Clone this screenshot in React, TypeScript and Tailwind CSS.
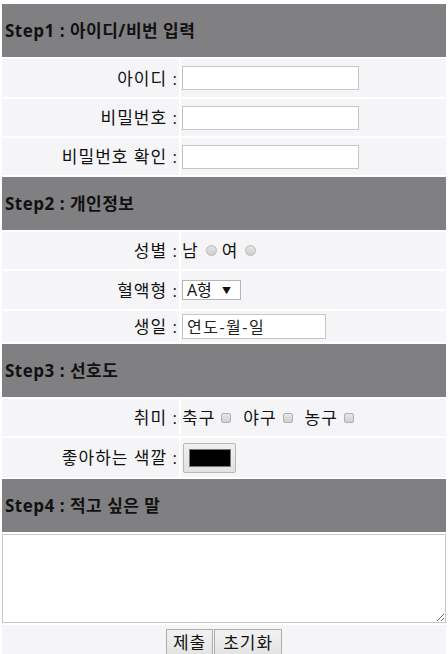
import React from "react";

const FONT = "font-['Open_Sans','Noto_Sans_CJK_KR',sans-serif]";

function Header({ children }: { children: React.ReactNode }) {
  return (
    <div className="col-span-2 h-[53px] bg-[#807f82] flex items-center pl-[3px] text-[17px] tracking-[0.5px] font-bold text-[#111] leading-none">
      {children}
    </div>
  );
}

function Label({ children, h }: { children: React.ReactNode; h: string }) {
  return (
    <div className={`${h} bg-[#f5f5f7] flex items-center justify-end pr-[1px] text-[17px] tracking-[1px] text-[#111] leading-none`}>
      {children}
    </div>
  );
}

function Cell({ children, h }: { children: React.ReactNode; h: string }) {
  return (
    <div className={`${h} bg-[#f5f5f7] flex items-center pl-[1px] text-[17px] tracking-[1px] text-[#111] leading-none`}>
      {children}
    </div>
  );
}

function TextBox({ w }: { w: string }) {
  return (
    <input
      type="text"
      className={`${w} h-[24px] bg-white border border-[#c6c6c6] outline-none px-1`}
    />
  );
}

function Radio() {
  return (
    <span className="inline-block w-[11px] h-[11px] rounded-full border border-[#b8b8b8] bg-gradient-to-b from-[#e4e4e4] to-[#cfcfcf] ml-[7px] mr-[5px]" />
  );
}

function Check() {
  return (
    <span className="inline-block w-[10px] h-[10px] rounded-[2px] border border-[#b0b0b0] bg-gradient-to-b from-[#e8e8e8] to-[#d0d0d0] ml-[6px]" />
  );
}

export default function App() {
  return (
    <div className={`${FONT} w-[448px] h-[654px] bg-white overflow-hidden pt-[4px] px-[2px]`}>
      <div className="grid grid-cols-[177px_265px] gap-[2px]">
        <Header>Step1 : 아이디/비번 입력</Header>
        <Label h="h-[38px]">아이디 :</Label>
        <Cell h="h-[38px]"><TextBox w="w-[177px]" /></Cell>
        <Label h="h-[37px]">비밀번호 :</Label>
        <Cell h="h-[37px]"><TextBox w="w-[177px]" /></Cell>
        <Label h="h-[37px]">비밀번호 확인 :</Label>
        <Cell h="h-[37px]"><TextBox w="w-[177px]" /></Cell>

        <Header>Step2 : 개인정보</Header>
        <Label h="h-[37px]">성별 :</Label>
        <Cell h="h-[37px]">
          <span>남</span>
          <Radio />
          <span>여</span>
          <Radio />
        </Cell>
        <Label h="h-[38px]">혈액형 :</Label>
        <Cell h="h-[38px]">
          <div className="w-[59px] h-[20px] bg-white border border-[#b5b5b5] flex items-center justify-between pl-[4px] pr-[9px] text-[16px] tracking-normal">
            <span>A형</span>
            <span className="text-[9px]">▼</span>
          </div>
        </Cell>
        <Label h="h-[31px]">생일 :</Label>
        <Cell h="h-[31px]">
          <div className="w-[144px] h-[25px] bg-white border border-[#c6c6c6] flex items-center pl-[4px] text-[16px] tracking-[1.5px] text-[#222]">
            연도-월-일
          </div>
        </Cell>

        <Header>Step3 : 선호도</Header>
        <Label h="h-[37px]">취미 :</Label>
        <Cell h="h-[37px]">
          <span>축구</span>
          <Check />
          <span className="ml-[12px]">야구</span>
          <Check />
          <span className="ml-[12px]">농구</span>
          <Check />
        </Cell>
        <Label h="h-[39px]">좋아하는 색깔 :</Label>
        <Cell h="h-[39px]">
          <div className="w-[53px] h-[30px] ml-[1px] bg-gradient-to-b from-[#f0f0f0] to-[#e2e2e2] border border-[#b8b8b8] rounded-[2px] flex items-center justify-center">
            <div className="w-[42px] h-[18px] bg-black border border-[#777]" />
          </div>
        </Cell>

        <Header>Step4 : 적고 싶은 말</Header>
        <div className="col-span-2 h-[89px] bg-[#f5f5f7] flex">
          <textarea className="w-full h-full bg-white border border-[#c6c6c6] outline-none resize-y" />
        </div>
        <div className="col-span-2 h-[40px] bg-[#f5f5f7] flex justify-center items-start pt-[4px]">
          <button className="h-[26px] px-[6px] bg-gradient-to-b from-[#f2f2f2] to-[#e4e4e4] border border-[#adadad] text-[17px] tracking-[1px] leading-none text-[#111]">
            제출
          </button>
          <button className="h-[26px] px-[8px] ml-[1px] bg-gradient-to-b from-[#f2f2f2] to-[#e4e4e4] border border-[#adadad] text-[17px] tracking-[1px] leading-none text-[#111]">
            초기화
          </button>
        </div>
      </div>
    </div>
  );
}
